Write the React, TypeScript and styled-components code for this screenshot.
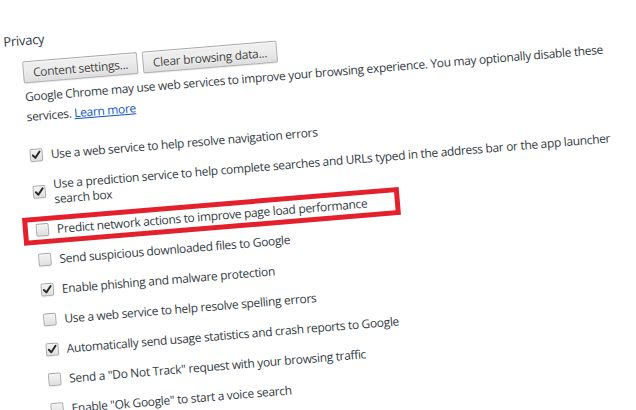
import React from 'react';
import styled, { createGlobalStyle } from 'styled-components';

const GlobalStyle = createGlobalStyle`
  html, body {
    margin: 0;
    padding: 0;
    background: #ffffff;
    overflow: hidden;
  }
  body {
    width: 636px;
    height: 410px;
    font-family: "Open Sans", "Noto Sans", sans-serif;
    color: #303942;
  }
`;

const Tilt = styled.div`
  width: 680px;
  padding-top: 33px;
  letter-spacing: -0.3px;
  transform-origin: 0 0;
  transform: rotate(-4.7deg);
`;

const Heading = styled.h3`
  margin: 0;
  font-size: 13px;
  line-height: 18px;
  font-weight: 400;
  color: #303942;
`;

const Section = styled.div`
  margin-left: 17px;
`;

const ButtonRow = styled.div`
  display: flex;
  gap: 5px;
  margin-top: 12px;
`;

const Button = styled.button`
  height: 22px;
  padding: 0 9px;
  font-family: inherit;
  font-size: 12px;
  letter-spacing: -0.3px;
  color: #444444;
  background-image: linear-gradient(#ededed, #ededed 38%, #dedede);
  border: 1px solid rgba(0, 0, 0, 0.25);
  border-radius: 2px;
  box-shadow: 0 1px 0 rgba(0, 0, 0, 0.08), inset 0 1px 2px rgba(255, 255, 255, 0.75);
  text-shadow: 0 1px 0 #f0f0f0;
`;

const Description = styled.p`
  margin: 4px 0 0;
  font-size: 12px;
  line-height: 20px;
  letter-spacing: -0.32px;
  white-space: nowrap;
`;

const Link = styled.a`
  color: #1155cc;
  text-decoration: underline;
`;

const List = styled.div`
  margin-top: 13px;
  display: flex;
  flex-direction: column;
`;

const Row = styled.label`
  position: relative;
  display: flex;
  align-items: center;
  gap: 8px;
  padding: 7.5px 0;
  font-size: 12px;
  line-height: 15px;
  letter-spacing: -0.32px;
  white-space: nowrap;
`;

const Box = styled.span`
  flex: none;
  display: flex;
  align-items: center;
  justify-content: center;
  width: 13px;
  height: 13px;
  box-sizing: border-box;
  border: 1px solid rgba(0, 0, 0, 0.27);
  border-radius: 2px;
  background-image: linear-gradient(#ededed, #ededed 38%, #dedede);
  box-shadow: 0 1px 0 rgba(0, 0, 0, 0.06), inset 0 1px 2px rgba(255, 255, 255, 0.75);
`;

const Highlight = styled.span`
  position: absolute;
  left: -13px;
  top: 2px;
  width: 378px;
  height: 28px;
  box-sizing: border-box;
  border: 5px solid #e3202c;
  pointer-events: none;
`;

const Check = () => (
  <svg width="11" height="11" viewBox="0 0 11 11" aria-hidden="true">
    <path d="M2 5.6 L4.3 8.2 L9 2.2" fill="none" stroke="#2b2b2b" strokeWidth="2" strokeLinecap="round" strokeLinejoin="round" />
  </svg>
);

type Item = { checked: boolean; lines: string[]; highlight?: boolean };

const items: Item[] = [
  { checked: true, lines: ['Use a web service to help resolve navigation errors'] },
  {
    checked: true,
    lines: [
      'Use a prediction service to help complete searches and URLs typed in the address bar or the app launcher',
      'search box',
    ],
  },
  { checked: false, lines: ['Predict network actions to improve page load performance'], highlight: true },
  { checked: false, lines: ['Send suspicious downloaded files to Google'] },
  { checked: true, lines: ['Enable phishing and malware protection'] },
  { checked: false, lines: ['Use a web service to help resolve spelling errors'] },
  { checked: true, lines: ['Automatically send usage statistics and crash reports to Google'] },
  { checked: false, lines: ['Send a "Do Not Track" request with your browsing traffic'] },
  { checked: false, lines: ['Enable "Ok Google" to start a voice search'] },
];

export default function App() {
  return (
    <>
      <GlobalStyle />
      <Tilt>
        <Heading>Privacy</Heading>
        <Section>
          <ButtonRow>
            <Button>Content settings...</Button>
            <Button>Clear browsing data...</Button>
          </ButtonRow>
          <Description>
            Google Chrome may use web services to improve your browsing experience. You may optionally disable these
            <br />
            services. <Link href="#">Learn more</Link>
          </Description>
          <List>
            {items.map((item, i) => (
              <Row key={i}>
                {item.highlight && <Highlight />}
                <Box>{item.checked && <Check />}</Box>
                <span>
                  {item.lines.map((line, j) => (
                    <React.Fragment key={j}>
                      {j > 0 && <br />}
                      {line}
                    </React.Fragment>
                  ))}
                </span>
              </Row>
            ))}
          </List>
        </Section>
      </Tilt>
    </>
  );
}
